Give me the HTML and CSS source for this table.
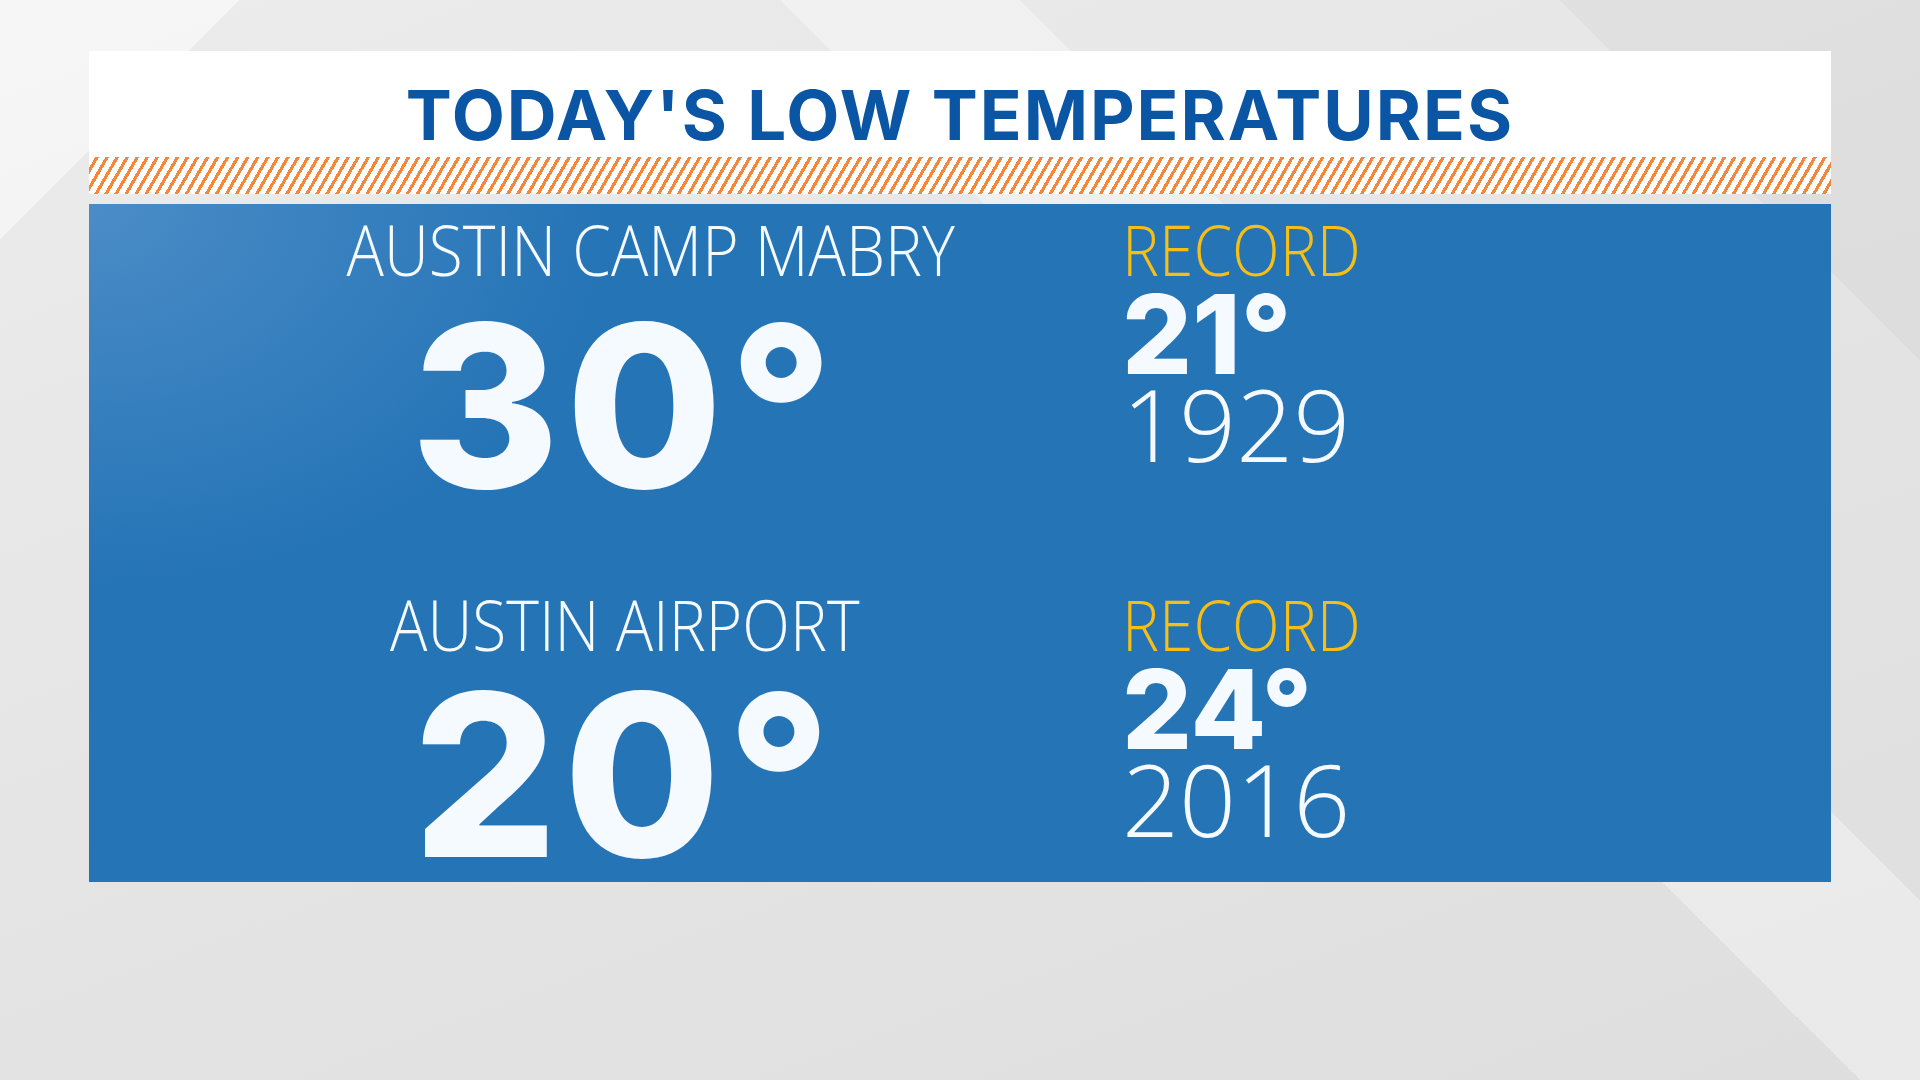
FILE: index.html
```html
<!DOCTYPE html>
<html lang="en">
<head>
    <meta charset="UTF-8">
    <meta name="viewport" content="width=device-width, initial-scale=1.0">
    <title>Today's Low Temperatures</title>
    <link rel="stylesheet" href="styles.css">
</head>
<body>
    <div class="board">
        <div class="header">
            <h1 class="title">TODAY'S LOW TEMPERATURES</h1>
            <div class="hatch"></div>
        </div>
        <div class="panel">
            <div class="station station-camp">
                <div class="station-name"><span>AUSTIN CAMP MABRY</span></div>
                <div class="station-temp">30°</div>
            </div>
            <div class="record">
                <div class="record-label"><span>RECORD</span></div>
                <div class="record-temp">21°</div>
                <div class="record-year">1929</div>
            </div>
            <div class="station station-airport">
                <div class="station-name"><span>AUSTIN AIRPORT</span></div>
                <div class="station-temp">20°</div>
            </div>
            <div class="record">
                <div class="record-label"><span>RECORD</span></div>
                <div class="record-temp">24°</div>
                <div class="record-year">2016</div>
            </div>
        </div>
    </div>
</body>
</html>
```

FILE: styles.css
```css
body {
    margin: 0;
    height: 1080px;
    overflow: hidden;
    font-family: Inter, "Liberation Sans", sans-serif;
    /* faceted grey backdrop */
    background:
        linear-gradient(135deg, rgba(255,255,255,0.5) 0 8%, transparent 8% 100%),
        linear-gradient(45deg, transparent 0 62%, rgba(255,255,255,0.35) 62% 70%, transparent 70%),
        linear-gradient(225deg, rgba(0,0,0,0.03) 0 12%, transparent 12%),
        linear-gradient(160deg, #ececec 0%, #e4e4e4 55%, #dedede 100%);
}
.board {
    width: 1742px;
    margin: 51px 0 0 89px;
}
.header {
    background: #fff;
}
.title {
    margin: 0;
    height: 106px;
    display: flex;
    align-items: center;
    justify-content: center;
    font-size: 69px;
    font-weight: 700;
    color: #0b56a4;
    letter-spacing: 2px;
    padding-top: 21px;
    box-sizing: border-box;
}
.hatch {
    height: 37px;
    background: repeating-linear-gradient(120deg, #fff 0 5.5px, #f5873a 5.5px 8.7px);
}
.panel {
    margin-top: 10px;
    height: 678px;
    box-sizing: border-box;
    padding: 0 0 0 76px;
    display: grid;
    grid-template-columns: 920px 1fr;
    grid-template-rows: 375px 1fr;
    column-gap: 37px;
    color: #f4faff;
    background:
        radial-gradient(ellipse 520px 380px at 0 0, rgba(120,170,220,0.45), transparent),
        #2574b6;
}
.station {
    text-align: center;
}
.station-name,
.record-label,
.record-year {
    font-family: "Open Sans", "Liberation Sans", sans-serif;
    font-weight: 300;
}
/* light caps in the graphic are a narrow face: squeeze the normal width */
.station-name span,
.record-label span {
    display: inline-block;
    transform: scaleX(0.89);
}
.record-label span {
    transform-origin: left center;
}
.station-name {
    font-size: 70px;
    line-height: 70px;
    margin-top: 10px;
}
.station-camp .station-name {
    padding-left: 52px;
}
.station-temp {
    font-size: 227px;
    font-weight: 800;
    letter-spacing: 6px;
    line-height: 200px;
    margin-top: 22px;
}
.station-airport .station-temp {
    margin-top: 16px;
}
.record-label {
    color: #f7be16;
    font-size: 70px;
    line-height: 70px;
    margin-top: 10px;
}
.record-temp {
    font-size: 110px;
    font-weight: 800;
    line-height: 92px;
    margin-top: 4px;
}
.record-year {
    font-size: 100px;
    line-height: 86px;
}
```
